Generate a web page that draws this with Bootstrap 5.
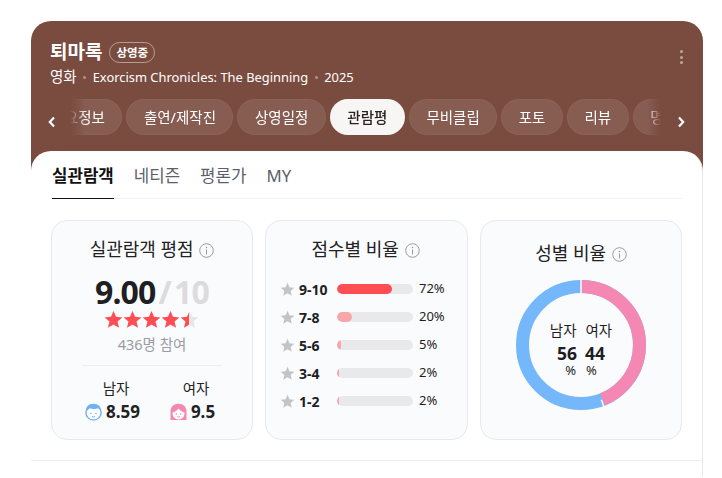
<!DOCTYPE html>
<html lang="ko">
<head>
  <meta charset="UTF-8">
  <meta name="viewport" content="width=device-width, initial-scale=1.0">
  <title>퇴마록 관람평</title>
  <link href="https://cdn.jsdelivr.net/npm/bootstrap@5.3.0/dist/css/bootstrap.min.css" rel="stylesheet">
  <style>
    body { font-family: "Noto Sans", "Noto Sans CJK KR", sans-serif; background: #fff; color: #1e1e23; overflow: hidden; }
    .shell { margin: 21px 19px 0 31px; background: #7a4b3f; border-radius: 20px 20px 0 0; }
    .hero { padding: 19px 18px 16px 19px; color: #fff; position: relative; }
    .hero-title { font-size: 19px; font-weight: 700; line-height: 24px; margin: 0; }
    .state-tag { font-size: 11.5px; font-weight: 700; line-height: 19px; padding: 0 6px; border: 1px solid rgba(255,255,255,.45); border-radius: 11px; margin-left: 7px; }
    .hero-sub { font-size: 12.9px; line-height: 20px; height: 20px; margin-top: 3px; }
    .hero-sub b { font-size: 14.5px; font-weight: 400; line-height: 1; }
    .hero-sub i { display: inline-block; width: 3px; height: 3px; border-radius: 50%; background: rgba(255,255,255,.4); margin: 0 6.5px; vertical-align: 3px; }
    .more-btn { position: absolute; right: 20px; top: 29px; display: flex; flex-direction: column; gap: 2.5px; }
    .more-btn span { width: 3px; height: 3px; background: rgba(255,255,255,.5); border-radius: 50%; }
    .pill-wrap { position: relative; margin: 12px -18px 0 -19px; padding: 0 42px 0 39px; }
    .pill-track { overflow: hidden; display: flex; gap: 4px;
      -webkit-mask-image: linear-gradient(90deg, transparent 0, #000 16px, #000 calc(100% - 14px), transparent 100%);
      mask-image: linear-gradient(90deg, transparent 0, #000 16px, #000 calc(100% - 14px), transparent 100%); }
    .pill-item { flex: none; height: 36px; line-height: 34px; padding: 0 16.5px; font-size: 14.5px; color: #fff; border-radius: 18px; background: rgba(255,255,255,.1); border: 1px solid rgba(255,255,255,.04); }
    .pill-item:first-child { margin-left: -36px; }
    .pill-item.on { background: #f8f6f5; color: #2a2222; font-weight: 500; }
    .pill-arrow { position: absolute; top: 16px; width: 14px; height: 14px; }
    .panel { background: #fff; border-radius: 20px 20px 0 0; border-right: 1px solid #e9e9ec; padding: 8px 20px 0 20px; }
    .tab-line { border-bottom: 1px solid #f1f1f3; display: flex; gap: 20px; font-size: 16.8px; height: 40px; margin-left: 1px; }
    .tab-line span { color: #5c5f6a; line-height: 34px; }
    .tab-line span.on { color: #111; font-weight: 700; border-bottom: 1px solid #111; height: 40px; }
    .stat-grid { display: grid; grid-template-columns: 202px 203px 202px; gap: 12px; margin-top: 21px; }
    .stat-box { height: 220px; background: #fafbfd; border: 1px solid #e8e9ec; border-radius: 16px; padding: 14px 16px; }
    .stat-box.bars-box { padding-left: 14px; }
    .stat-head { font-size: 18px; line-height: 28px; text-align: center; color: #222; }
    .stat-head svg { vertical-align: -2px; margin-left: 1px; }
    .big-score { font-size: 32px; font-weight: 700; line-height: 40px; text-align: center; letter-spacing: -.8px; word-spacing: -4.500px; margin-top: 9px; }
    .big-score em { font-style: normal; color: #dcdcde; }
    .star-row { position: relative; width: 95px; height: 18px; margin: -2px auto 0; display: flex; left: -1px; }
    .star-row svg { flex: none; }
    .star-fill { position: absolute; left: 0; top: 0; height: 18px; overflow: hidden; display: flex; }
    .join-text { font-size: 14.5px; color: #9a9ca3; text-align: center; line-height: 20px; margin-top: 6px; }
    .split-line { border-top: 1px solid #eff0f2; margin: 11px 14px 13px; }
    .split-col { font-size: 14.5px; line-height: 18px; text-align: center; color: #222; }
    .split-col:first-child { padding-left: 8px; }
    .split-num { font-size: 17px; font-weight: 700; line-height: 24px; display: flex; align-items: center; justify-content: center; gap: 4px; margin: 3px 7px 0 0; }
    .bar-row { display: flex; align-items: center; height: 28px; font-size: 13px; }
    .bar-row .lbl { width: 38px; font-size: 14px; font-weight: 700; margin-left: 4px; flex: none; }
    .bar-track { width: 76px; height: 10px; border-radius: 5px; background: #e9e9ec; overflow: hidden; flex: none; margin-right: 6px; }
    .bar-fill { height: 100%; border-radius: 5px; background: #f9a6ab; }
    .bar-fill.top { background: #ff4d53; }
    .ring-box { position: relative; width: 130px; height: 130px; margin: 13px auto 0; }
    .ring-text { position: absolute; top: 42px; left: 0; right: 0; text-align: center; }
    .ring-line { display: flex; justify-content: center; gap: 9px; font-size: 14.5px; line-height: 16px; }
    .ring-line.nums { gap: 8px; font-size: 17.5px; font-weight: 700; line-height: 22px; margin-top: 4px; }
    .ring-line.unit { gap: 10px; font-size: 13px; line-height: 14px; margin-top: -1px; }
    .panel-foot { border-top: 1px solid #eeeef0; height: 17px; margin: 20px -20px 0; }
  </style>
</head>
<body>
  <div class="shell">
    <div class="hero">
      <div class="d-flex align-items-center">
        <h1 class="hero-title">퇴마록</h1>
        <span class="state-tag">상영중</span>
      </div>
      <div class="hero-sub"><b>영화</b><i></i>Exorcism Chronicles: The Beginning<i></i>2025</div>
      <div class="more-btn"><span></span><span></span><span></span></div>
      <div class="pill-wrap">
        <svg class="pill-arrow" style="left:14px" viewBox="0 0 14 14"><path d="M9 2.500 4.800 7 9 11.500" fill="none" stroke="#fff" stroke-width="2.200"/></svg>
        <div class="pill-track">
          <span class="pill-item">주요정보</span>
          <span class="pill-item">출연/제작진</span>
          <span class="pill-item">상영일정</span>
          <span class="pill-item on">관람평</span>
          <span class="pill-item">무비클립</span>
          <span class="pill-item">포토</span>
          <span class="pill-item">리뷰</span>
          <span class="pill-item">명대사</span>
        </div>
        <svg class="pill-arrow" style="right:15px" viewBox="0 0 14 14"><path d="M5 2.500 9.200 7 5 11.500" fill="none" stroke="#fff" stroke-width="2.200"/></svg>
      </div>
    </div>
    <div class="panel">
      <div class="tab-line">
        <span class="on">실관람객</span><span>네티즌</span><span>평론가</span><span>MY</span>
      </div>
      <div class="stat-grid">
        <div class="stat-box">
          <div class="stat-head">실관람객 평점 <svg width="15" height="15" viewBox="0 0 15 15"><use href="#info"/></svg></div>
          <div class="big-score">9.00 <em>/ 10</em></div>
          <div class="star-row" id="stars"></div>
          <div class="join-text">436명 참여</div>
          <div class="split-line"></div>
          <div class="row g-0">
            <div class="col split-col">남자
              <div class="split-num">
                <svg width="17" height="18" viewBox="0 0 17 18"><circle cx="8.500" cy="9.500" r="7.600" fill="#fff" stroke="#6fb1f5" stroke-width="1.400"/><path d="M1 9C.5 3.500 4 .8 8.500.8S16.500 3.500 16 9c-1-2-2-3.500-3-3.800-2 1-6 1-8 0C3.500 6 2 7.500 1 9Z" fill="#6fb1f5"/><circle cx="6" cy="10.500" r=".8" fill="#6fb1f5"/><circle cx="11" cy="10.500" r=".8" fill="#6fb1f5"/><path d="M7 13.500q1.500 1 3 0" fill="none" stroke="#6fb1f5"/></svg>
                8.59</div>
            </div>
            <div class="col split-col">여자
              <div class="split-num">
                <svg width="17" height="18" viewBox="0 0 17 18"><path d="M.5 17V8.500C.5 3.500 4 .8 8.500.8s8 2.700 8 7.700V17Z" fill="#f587b3"/><circle cx="8.500" cy="10.500" r="6" fill="#fff"/><path d="M2.500 9.500C5 9 7 7.500 8.500 5.500c1.500 2 3.500 3.500 6 4V6l-3-3h-6l-3 3Z" fill="#f587b3"/><circle cx="6.300" cy="11" r=".8" fill="#f587b3"/><circle cx="10.700" cy="11" r=".8" fill="#f587b3"/><path d="M7.200 13.500q1.300 1 2.600 0" fill="none" stroke="#f587b3"/></svg>
                9.5</div>
            </div>
          </div>
        </div>
        <div class="stat-box bars-box">
          <div class="stat-head mb-2">점수별 비율 <svg width="15" height="15" viewBox="0 0 15 15"><use href="#info"/></svg></div>
          <div id="bars" class="pt-1"></div>
        </div>
        <div class="stat-box">
          <div class="stat-head mt-1">성별 비율 <svg width="15" height="15" viewBox="0 0 15 15"><use href="#info"/></svg></div>
          <div class="ring-box">
            <svg width="130" height="130" viewBox="0 0 130 130">
              <circle cx="65" cy="65" r="58.500" fill="none" stroke="#74b7fb" stroke-width="13"/>
              <circle cx="65" cy="65" r="58.500" fill="none" stroke="#f587b3" stroke-width="13" pathLength="100" stroke-dasharray="44 56" transform="rotate(-90 65 65)"/>
              <path d="M65 0V13" stroke="#fafbfd" stroke-width="1.500"/>
              <path d="M85.300 119.800 89.200 130" stroke="#fafbfd" stroke-width="1.500"/>
            </svg>
            <div class="ring-text">
              <div class="ring-line"><span>남자</span><span>여자</span></div>
              <div class="ring-line nums"><span>56</span><span>44</span></div>
              <div class="ring-line unit"><span>%</span><span>%</span></div>
            </div>
          </div>
        </div>
      </div>
      <div class="panel-foot"></div>
    </div>
  </div>

  <svg width="0" height="0" class="position-absolute">
    <symbol id="info" viewBox="0 0 15 15"><circle cx="7.500" cy="7.500" r="6.800" fill="none" stroke="#9a9ca3"/><circle cx="7.500" cy="4.500" r=".8" fill="#9a9ca3"/><path d="M7.500 6.500v5" stroke="#9a9ca3"/></symbol>
    <symbol id="star" viewBox="0 0 19 18"><path d="M9.500 1 12 6.800l6.300.6-4.800 4.100 1.500 6.200-5.500-3.300L4 17.700l1.500-6.200L.7 7.400 7 6.800Z"/></symbol>
  </svg>

  <script>
    const star = (w, h, color) => `<svg width="${w}" height="${h}" fill="${color}" viewBox="0 0 19 18"><use href="#star"/></svg>`;
    document.getElementById('stars').innerHTML =
      star(19, 18, '#e6e6e8').repeat(5) +
      `<div class="star-fill" style="width:${9.0 * 10}%">${star(19, 18, '#ff4d53').repeat(5)}</div>`;

    const scores = [['9-10', 72], ['7-8', 20], ['5-6', 5], ['3-4', 2], ['1-2', 2]];
    document.getElementById('bars').innerHTML = scores.map(([label, pct], i) => `
      <div class="bar-row">
        ${star(15, 14, '#c4c4c8')}
        <span class="lbl">${label}</span>
        <div class="bar-track"><div class="bar-fill ${i === 0 ? 'top' : ''}" style="width:${pct}%"></div></div>
        <span>${pct}%</span>
      </div>`).join('');
  </script>
  <script src="https://cdn.jsdelivr.net/npm/bootstrap@5.3.0/dist/js/bootstrap.bundle.min.js"></script>
</body>
</html>
